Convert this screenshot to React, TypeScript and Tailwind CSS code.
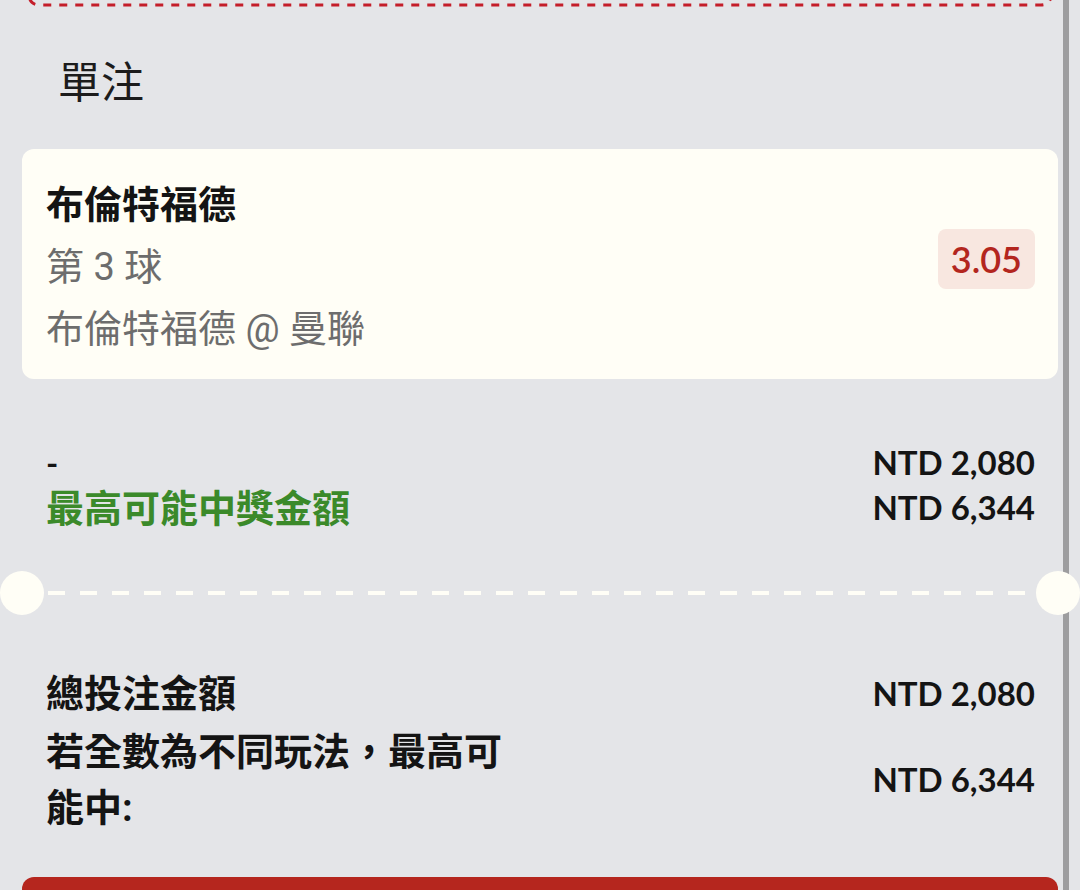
export default function App() {
  return (
    <div className="relative w-[1080px] h-[890px] overflow-hidden bg-[#e4e5e8] font-['Roboto','Noto_Sans_CJK_TC',sans-serif]">
      {/* scrollbar */}
      <div className="absolute left-[1063px] top-0 bottom-0 w-[6px] bg-[#9d9d9f]" />

      {/* bottom edge of previous dashed box */}
      <svg className="block h-[10px] w-[1080px]" viewBox="0 0 1080 10">
        <path
          d="M29 -14 L29 -6 Q29 5 40 5 L1041 5 Q1051 5 1051 -6 L1051 -14"
          fill="none"
          stroke="#c41e2a"
          strokeWidth="3"
          strokeDasharray="8 8"
          strokeDashoffset="3"
        />
      </svg>

      <h2 className="mt-[52px] pl-[58px] text-[43px] leading-none font-normal text-[#1c1c1c]">單注</h2>

      {/* selection card */}
      <div className="mx-[22px] mt-[44px] flex rounded-[12px] bg-[#fffef6] pt-[25px] pb-[19px] pl-[24px] pr-[23px]">
        <div className="flex-1 text-[38px] leading-[62px]">
          <div className="font-bold text-[#141414]">布倫特福德</div>
          <div className="text-[#6d6d6d]">第 3 球</div>
          <div className="text-[#6d6d6d]">布倫特福德 @ 曼聯</div>
        </div>
        <div className="mt-[55px] self-start flex h-[60px] items-center rounded-[8px] bg-[#f8e7e0] px-[13px] font-['Lato',sans-serif] text-[36px] font-semibold leading-none text-[#b3261e]">
          3.05
        </div>
      </div>

      {/* summary */}
      <div className="mx-[22px] mt-[62px] pl-[24px] pr-[23px]">
        <div className="flex items-center justify-between leading-[43px]">
          <span className="font-['Lato',sans-serif] text-[33px] font-bold text-[#141414]">-</span>
          <span className="font-['Lato',sans-serif] text-[33px] font-bold text-[#141414]">NTD 2,080</span>
        </div>
        <div className="flex items-center justify-between leading-[43px]">
          <span className="pt-[4px] text-[38px] font-semibold text-[#3b8a2a]">最高可能中獎金額</span>
          <span className="font-['Lato',sans-serif] text-[33px] font-bold text-[#141414]">NTD 6,344</span>
        </div>
      </div>

      {/* divider with notches */}
      <div className="relative mt-[40px] h-[44px]">
        <div className="absolute left-0 top-0 h-[44px] w-[44px] rounded-full bg-[#fffef6]" />
        <div className="flex h-full items-center px-[46px]">
          <svg className="h-[4px] w-full" preserveAspectRatio="none">
            <line x1="2" y1="2" x2="100%" y2="2" stroke="#fffef6" strokeWidth="4" strokeDasharray="17 15" />
          </svg>
        </div>
        <div className="absolute right-0 top-0 h-[44px] w-[44px] rounded-full bg-[#fffef6]" />
      </div>

      {/* totals */}
      <div className="mx-[22px] mt-[51px] pl-[24px] pr-[23px] text-[#141414]">
        <div className="flex items-center justify-between">
          <span className="text-[38px] leading-[56px] font-bold">總投注金額</span>
          <span className="font-['Lato',sans-serif] text-[33px] font-bold">NTD 2,080</span>
        </div>
        <div className="mt-[2px] flex items-center justify-between">
          <span className="w-[480px] text-[38px] leading-[56px] font-bold">若全數為不同玩法，最高可能中:</span>
          <span className="font-['Lato',sans-serif] text-[33px] font-bold">NTD 6,344</span>
        </div>
      </div>

      {/* confirm button */}
      <div className="mx-[22px] mt-[41px] h-[60px] rounded-[12px] bg-[#b5261e]" />
    </div>
  );
}
